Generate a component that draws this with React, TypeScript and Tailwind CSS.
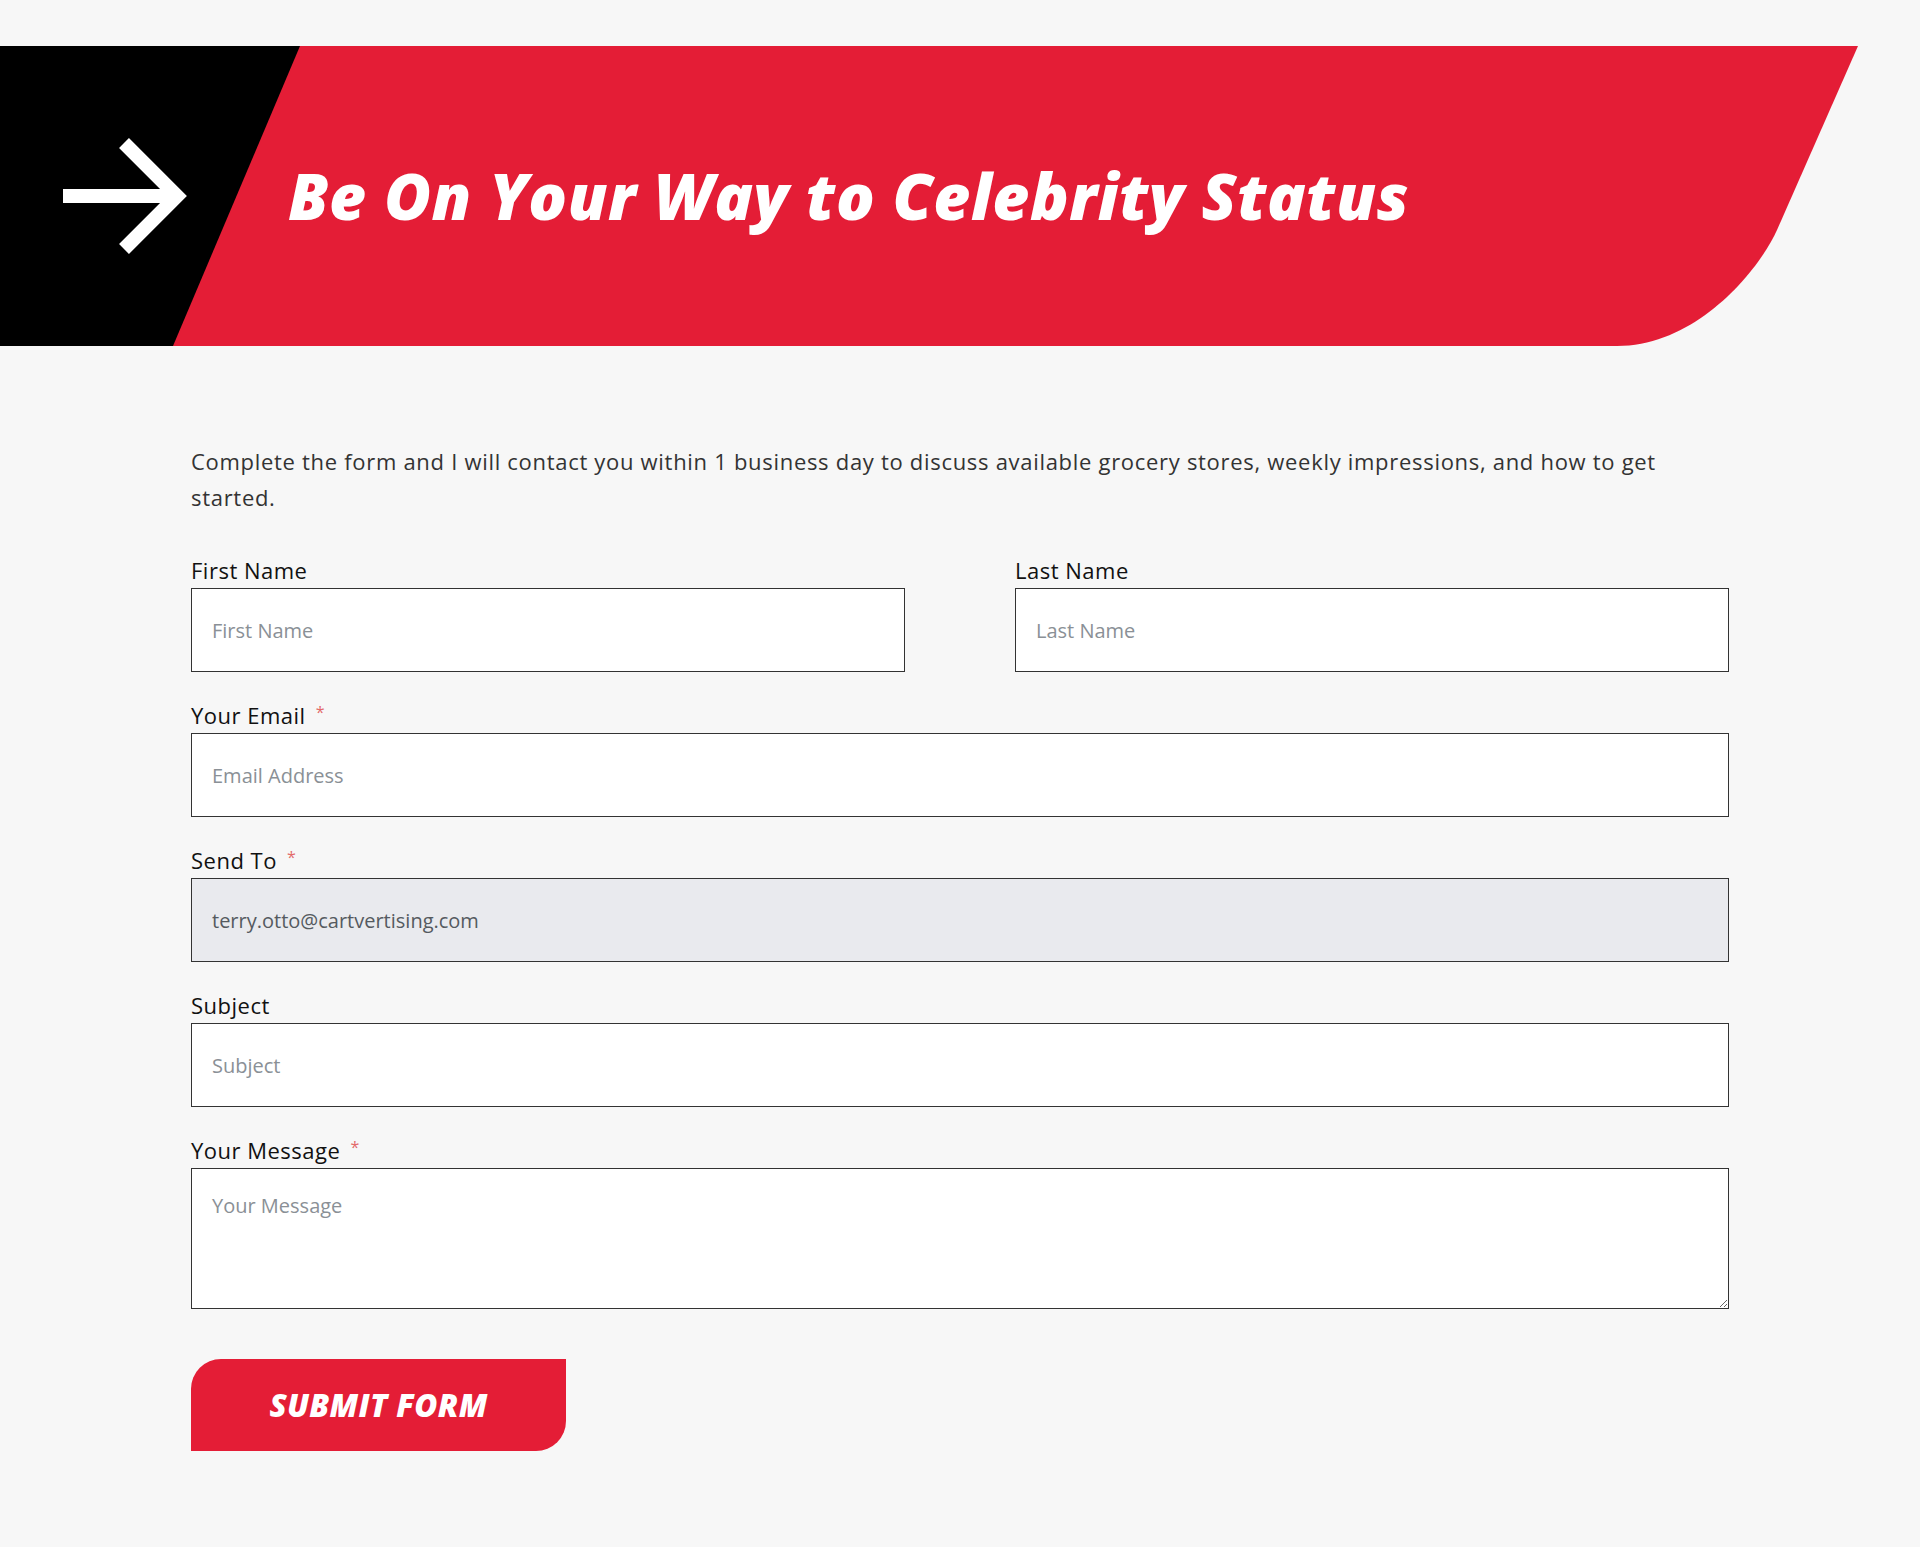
export default function App() {
  const labelCls =
    "block text-[22px] leading-[28px] text-[#111] mb-[4px] tracking-[0.5px] font-['Open_Sans','Liberation_Sans',sans-serif]";
  const inputCls =
    "block w-full h-[84px] border border-[#333] bg-white px-[20px] text-[20px] text-[#333] outline-none font-['Open_Sans','Liberation_Sans',sans-serif] placeholder:text-[#8a9096]";
  const Star = () => (
    <span className="ml-[10px] text-[16px] leading-none text-[#e36a6a] align-[6px]">*</span>
  );
  return (
    <div className="min-h-[1547px] w-full bg-[#f7f7f7] pt-[46px] pb-[60px]">
      <div className="relative h-[300px] w-full">
        <svg
          className="absolute inset-0"
          width="1920"
          height="300"
          viewBox="0 0 1920 300"
        >
          <rect x="0" y="0" width="320" height="300" fill="#000" />
          <path
            d="M300 0 H1858 L1777 184 C1759 224 1697 300 1617 300 H173 Z"
            fill="#e41d36"
          />
          <path
            d="M63 150 H178 M124 97 L177 150 L124 203"
            stroke="#fff"
            strokeWidth="14"
            fill="none"
            strokeLinejoin="miter"
          />
        </svg>
        <div className="relative flex h-full items-center pl-[288px]">
          <h1 className="text-[64px] leading-none font-extrabold italic text-white font-['Open_Sans','Liberation_Sans',sans-serif] tracking-[0.55px]">
            Be On Your Way to Celebrity Status
          </h1>
        </div>
      </div>

      <div className="mx-auto w-[1538px] pt-[97px]">
        <p className="text-[22px] leading-[36px] text-[#333] tracking-[0.7px] font-['Open_Sans','Liberation_Sans',sans-serif]">
          Complete the form and I will contact you within 1 business day to
          discuss available grocery stores, weekly impressions, and how to get
          <br />
          started.
        </p>

        <form className="mt-[41px] flex flex-col gap-[29px]" onSubmit={(e) => e.preventDefault()}>
          <div className="grid grid-cols-2 gap-x-[110px]">
            <div>
              <label className={labelCls}>First Name</label>
              <input className={inputCls} placeholder="First Name" />
            </div>
            <div>
              <label className={labelCls}>Last Name</label>
              <input className={inputCls} placeholder="Last Name" />
            </div>
          </div>
          <div>
            <label className={labelCls}>
              Your Email
              <Star />
            </label>
            <input className={inputCls} placeholder="Email Address" />
          </div>
          <div>
            <label className={labelCls}>
              Send To
              <Star />
            </label>
            <input
              className="block w-full h-[84px] border border-[#333] bg-[#e9eaee] px-[20px] text-[20px] text-[#555a60] outline-none font-['Open_Sans','Liberation_Sans',sans-serif]"
              value="terry.otto@cartvertising.com"
              readOnly
            />
          </div>
          <div>
            <label className={labelCls}>Subject</label>
            <input className={inputCls} placeholder="Subject" />
          </div>
          <div>
            <label className={labelCls}>
              Your Message
              <Star />
            </label>
            <textarea
              className="block w-full h-[141px] border border-[#333] bg-white px-[20px] pt-[23px] text-[20px] leading-[27px] text-[#333] outline-none font-['Open_Sans','Liberation_Sans',sans-serif] placeholder:text-[#8a9096]"
              placeholder="Your Message"
            />
          </div>
          <div className="pt-[21px]">
            <button
              type="submit"
              className="flex h-[92px] w-[375px] items-center justify-center rounded-tl-[30px] rounded-br-[30px] bg-[#e41d36] text-[31.5px] font-extrabold italic uppercase text-white tracking-[0.3px] font-['Open_Sans','Liberation_Sans',sans-serif]"
            >
              Submit Form
            </button>
          </div>
        </form>
      </div>
    </div>
  );
}
